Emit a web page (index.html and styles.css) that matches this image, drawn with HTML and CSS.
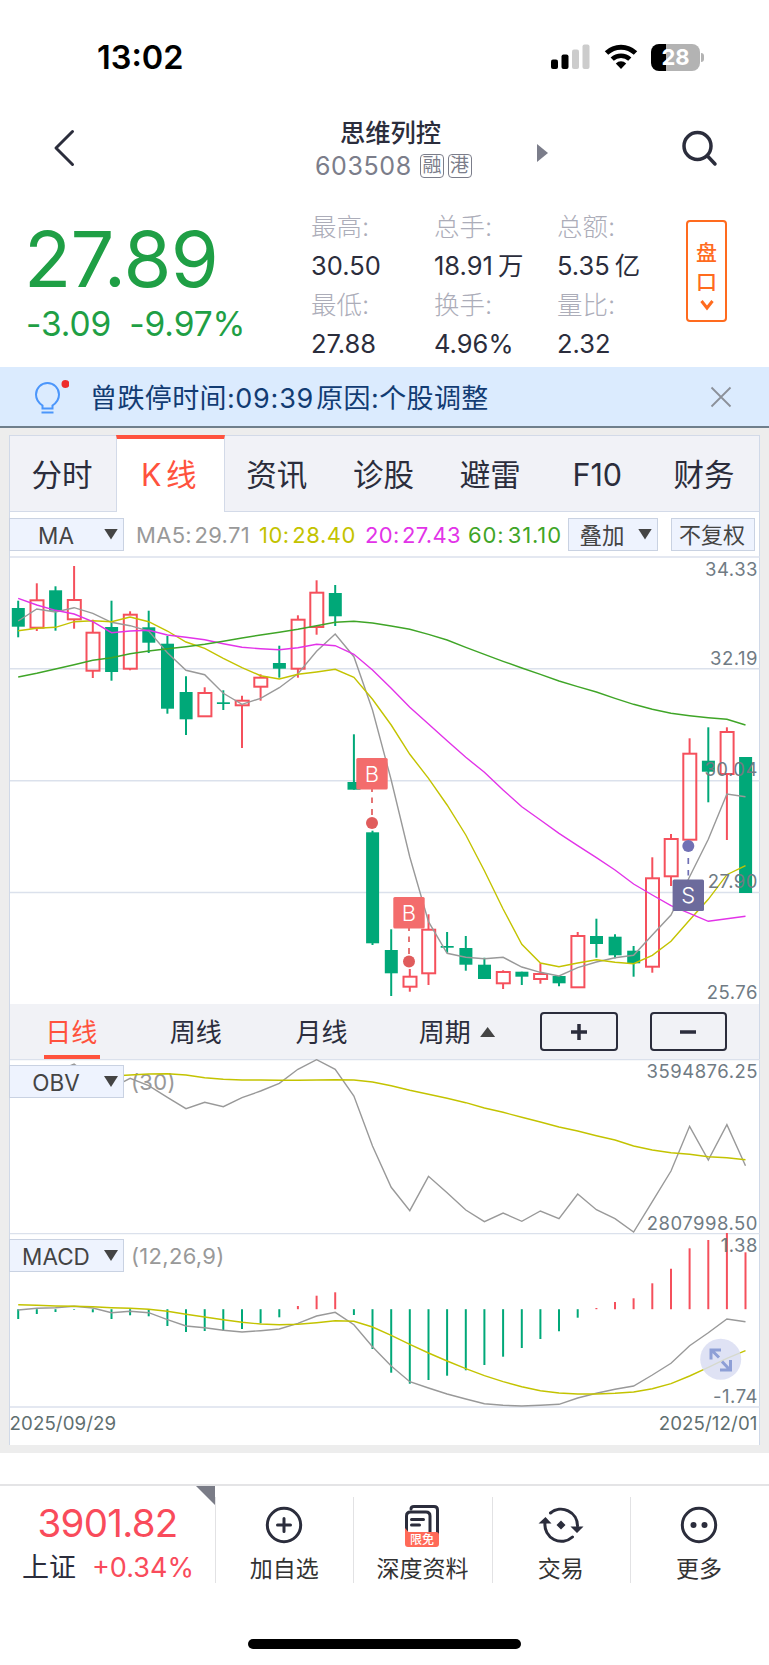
FILE: index.html
```html
<!DOCTYPE html>
<html lang="zh-CN">
<head>
    <meta charset="utf-8">
    <title>思维列控 603508</title>
    <link rel="stylesheet" href="styles.css">
</head>
<body>
    <div class="status-bar">
        <span class="time">13:02</span>
        <svg class="signal" width="39" height="26" viewBox="0 0 39 26">
            <rect x="0" y="15.500" width="7" height="9.500" rx="2" />
            <rect x="10.500" y="10.500" width="7" height="14.500" rx="2" />
            <rect x="21" y="5.500" width="7" height="19.500" rx="2" fill="#ccc" />
            <rect x="31.500" y="0.500" width="7" height="24.500" rx="2" fill="#ccc" />
        </svg>
        <svg class="wifi" width="34" height="26" viewBox="0 0 34 26">
            <path d="M2.500 9 A21 21 0 0 1 31.500 9" fill="none" stroke="#000" stroke-width="5" />
            <path d="M8.200 15.200 A12.800 12.800 0 0 1 25.800 15.200" fill="none" stroke="#000" stroke-width="4.600" />
            <path d="M17 25 L11.800 19.400 A7.500 7.500 0 0 1 22.200 19.400 Z" />
        </svg>
        <div class="battery"><span>28</span></div>
    </div>

    <header class="header">
        <svg class="back" width="24" height="40" viewBox="0 0 24 40">
            <path d="M20.500 3.500 L4 20 L20.500 36.500" />
        </svg>
        <div class="stock">
            <div class="stock-name">思维列控</div>
            <div class="stock-code"><span class="code">603508</span><span class="tag">融</span><span class="tag">港</span></div>
        </div>
        <div class="next"></div>
        <svg class="search" width="40" height="40" viewBox="0 0 40 40">
            <circle cx="17.500" cy="18" r="13.500" />
            <path d="M27.500 28 L35 36" />
        </svg>
    </header>

    <section class="quote">
        <div class="quote-price">
            <div class="price">27.89</div>
            <div class="change"><span>-3.09</span><span>-9.97%</span></div>
        </div>
        <div class="quote-grid">
            <div><label>最高:</label><b>30.50</b></div>
            <div><label>总手:</label><b>18.91<i>万</i></b></div>
            <div><label>总额:</label><b>5.35<i>亿</i></b></div>
            <div><label>最低:</label><b>27.88</b></div>
            <div><label>换手:</label><b>4.96%</b></div>
            <div><label>量比:</label><b>2.32</b></div>
        </div>
        <div class="pankou">
            <span>盘</span>
            <span>口</span>
            <svg width="14" height="12" viewBox="0 0 14 12"><path d="M1.500 2 L7 9 L12.500 2" /></svg>
        </div>
    </section>

    <div class="notice">
        <svg class="bulb" width="36" height="36" viewBox="0 0 36 36">
            <path d="M9.500 29.500 V26.500 C5 23.500 3 19.500 3 15.500 A11.500 11.500 0 0 1 26 15.500 C26 19.500 24 23.500 19.500 26.500 V29.500 Z" />
            <path d="M8.500 33.500 H20.500" />
            <circle cx="32.500" cy="5" r="4" />
        </svg>
        <span class="notice-text">曾跌停时间:<em>09:39</em>原因:个股调整</span>
        <svg class="close" width="22" height="22" viewBox="0 0 22 22"><path d="M1.500 1.500 L20.500 20.500 M20.500 1.500 L1.500 20.500" /></svg>
    </div>

    <main class="main">
        <div class="panel">
            <nav class="tabs">
                <a>分时</a>
                <a class="active">K 线</a>
                <a>资讯</a>
                <a>诊股</a>
                <a>避雷</a>
                <a>F10</a>
                <a>财务</a>
            </nav>

            <div class="ma-row">
                <div class="select">MA</div>
                <div class="ma ma5">MA5: 29.71</div>
                <div class="ma ma10">10: 28.40</div>
                <div class="ma ma20">20: 27.43</div>
                <div class="ma ma60">60: 31.10</div>
                <div class="btn btn-add">叠加</div>
                <div class="btn btn-fq">不复权</div>
            </div>

            <svg id="kline" class="kline" width="750" height="448" viewBox="10 556 750 448"></svg>

            <div class="period">
                <a class="active">日线</a>
                <a>周线</a>
                <a>月线</a>
                <a class="more">周期</a>
                <button><svg width="16" height="16" viewBox="0 0 16 16"><path d="M8 0 V16 M0 8 H16" /></svg></button>
                <button><svg width="16" height="16" viewBox="0 0 16 16"><path d="M0 8 H16" /></svg></button>
            </div>

            <div class="sub">
                <svg id="obv" width="750" height="174" viewBox="10 1059 750 174"></svg>
                <div class="select">OBV</div>
            </div>
            <div class="sub">
                <svg id="macd" width="750" height="212" viewBox="10 1233 750 212"></svg>
                <div class="select">MACD</div>
            </div>
        </div>
    </main>

    <footer class="footer">
        <div class="index">
            <div class="index-value">3901.82</div>
            <div class="index-row"><span>上证</span><span class="up">+0.34%</span></div>
        </div>
        <div class="action">
            <svg width="50" height="66" viewBox="0 0 50 66">
                <circle cx="25" cy="33" r="16.700" />
                <path d="M25 26.500 V39.500 M18.500 33 H31.500" />
            </svg>
            <span>加自选</span>
        </div>
        <div class="action">
            <svg width="50" height="66" viewBox="0 0 50 66">
                <path d="M14 17 C14 15 15 14.500 17 14.500 H37 C40 14.500 40.500 16 40.500 18 V43" />
                <path d="M9.500 43 V24 Q9.500 20 13.500 20 H29 Q33 20 33 24 V43" />
                <path d="M14.500 27.500 H26.500 M14.500 33 H22.500" />
                <path d="M8 36 L11.500 40 H39 Q42 40 42 43 V52 Q42 55 39 55 H11 Q8 55 8 52 Z" fill="#ff6a58" stroke="none" />
                <text x="25" y="52" text-anchor="middle">限免</text>
            </svg>
            <span>深度资料</span>
        </div>
        <div class="action">
            <svg width="50" height="66" viewBox="0 0 50 66">
                <path d="M14.500 21 A16.500 16.500 0 0 1 41.500 34" />
                <path d="M36.500 45 A16.500 16.500 0 0 1 9 31" />
                <path d="M2.500 31.500 L9.500 25 L15.500 31.500 Z M34.500 34.500 H47.500 L41 41 Z M25 28.500 L29.500 33 L25 37.500 L20.500 33 Z" fill="#2b2d3c" stroke="none" />
            </svg>
            <span>交易</span>
        </div>
        <div class="action">
            <svg width="50" height="66" viewBox="0 0 50 66">
                <circle cx="25" cy="33" r="16.700" />
                <circle cx="19.500" cy="33" r="3" fill="#2b2d3c" stroke="none" />
                <circle cx="30.500" cy="33" r="3" fill="#2b2d3c" stroke="none" />
            </svg>
            <span>更多</span>
        </div>
    </footer>
    <div class="home-bar"></div>

    <script src="chart.js"></script>
</body>
</html>
```

FILE: styles.css
```css
* {
    box-sizing: border-box;
}

body {
    margin: 0;
    width: 769px;
    height: 1665px;
    overflow: hidden;
    background: #fff;
    color: #2b2d3c;
    font-family: Inter, "Noto Sans CJK SC", sans-serif;
    -webkit-font-smoothing: antialiased;
}

/* status bar */
.status-bar {
    height: 114px;
    display: flex;
    align-items: center;
    padding: 0 69px 0 97px;
    color: #000;
}

.time {
    flex: 1;
    padding-top: 1px;
    font-size: 32.500px;
    font-weight: 600;
}

.wifi {
    margin: 0 13px 0 14px;
}

.battery {
    position: relative;
    width: 49px;
    height: 27px;
    border-radius: 8px;
    background: linear-gradient(90deg, #000 14.5px, #b3b3b3 14.5px);
    color: #fff;
    font-size: 22px;
    font-weight: 700;
    line-height: 27px;
    text-align: center;
}

.battery::after {
    content: "";
    position: absolute;
    right: -4px;
    top: 9px;
    width: 3px;
    height: 9px;
    border-radius: 0 4px 4px 0;
    background: #b3b3b3;
}

/* header */
.header {
    height: 92px;
    display: flex;
    padding-left: 52px;
}

.header svg {
    fill: none;
    stroke: #2b2d3c;
    stroke-width: 3;
    stroke-linecap: round;
    stroke-linejoin: round;
    margin-top: 14px;
}

.stock {
    width: 156px;
    margin-left: 240px;
}

.stock-name {
    margin-top: 1px;
    text-align: center;
    padding-right: 7px;
    font-size: 25.300px;
    font-weight: 500;
    line-height: 36px;
}

.stock-code {
    display: flex;
    align-items: center;
    height: 30px;
    margin-left: -1px;
    color: #7b7d8a;
    font-size: 25px;
    letter-spacing: 0.6px;
}

.code {
    width: 105px;
    flex: none;
}

.tag {
    width: 24px;
    height: 24px;
    margin-right: 3.500px;
    border: 1.500px solid #7b7d8a;
    border-radius: 4px;
    font-size: 19px;
    letter-spacing: 0;
    line-height: 21px;
    text-align: center;
    flex: none;
}

.next {
    margin: 30px 0 0 65px;
    width: 11px;
    height: 18px;
    background: #7b7d8a;
    clip-path: polygon(0 0, 100% 50%, 0 100%);
}

.header .search {
    stroke-width: 3.500;
    margin-left: 132px;
}

/* quote */
.quote {
    height: 161px;
    display: flex;
}

.quote-price {
    width: 311px;
    padding-left: 26px;
    color: #1f9f45;
}

.price {
    margin: 10px 0 0 -2px;
    font-size: 77.500px;
    line-height: 86px;
    letter-spacing: -0.800px;
}

.change {
    display: flex;
    gap: 18px;
    font-size: 33.500px;
    line-height: 44px;
    letter-spacing: -0.100px;
}

.quote-grid {
    width: 375px;
    display: grid;
    grid-template-columns: 123px 123px 129px;
    grid-template-rows: 78px 78px;
    padding-top: 1px;
}

.quote-grid label,
.quote-grid b {
    display: block;
    font-size: 25.500px;
    line-height: 39px;
    font-weight: 400;
    white-space: nowrap;
}

.quote-grid label {
    color: #acadb9;
    font-weight: 300;
}

.quote-grid i {
    font-style: normal;
    margin-left: 5px;
}

.pankou {
    width: 41px;
    height: 102px;
    margin-top: 14px;
    padding-top: 16px;
    border: 2px solid #ff6b1e;
    border-radius: 4px;
    display: flex;
    flex-direction: column;
    align-items: center;
    color: #ff6b1e;
    font-size: 21px;
    line-height: 30px;
    font-weight: 500;
}

.pankou span {
    height: 29px;
}

.pankou svg {
    fill: none;
    stroke: #ff6b1e;
    stroke-width: 3;
    margin-top: 3px;
}

/* notice */
.notice {
    height: 61px;
    display: flex;
    align-items: center;
    padding: 0 37px 0 33px;
    background: #dbebfe;
    border-bottom: 2px solid #6f7f8c;
}

.bulb {
    fill: none;
    stroke: #4b96fb;
    stroke-width: 2;
}

.bulb circle {
    fill: #ee2c2c;
    stroke: none;
}

.notice-text {
    flex: 1;
    margin-left: 21px;
    color: #123c73;
    font-size: 27px;
    letter-spacing: 0.4px;
    white-space: nowrap;
}

.notice-text em {
    font-style: normal;
    letter-spacing: 0.8px;
    margin-right: 2px;
}

.close {
    stroke: #8b9099;
    stroke-width: 1.800;
}

/* chart panel */
.main {
    height: 1025px;
    padding: 7px 9px 8px;
    background: #ededed;
}

.panel {
    width: 751px;
    height: 1010px;
    background: #fff;
    border-left: 1px solid #d0d9e8;
    border-right: 1px solid #d0d9e8;
}

.tabs {
    height: 77px;
    display: flex;
    background: #f1f2f7;
    border-top: 1px solid #d3dae8;
}

.tabs a {
    flex: 1;
    padding-right: 3px;
    border-bottom: 1px solid #d3dae8;
    font-size: 30.500px;
    line-height: 77px;
    text-align: center;
}

.tabs .active {
    margin: -1px 0 0 -1px;
    padding-right: 3px;
    background: #fff;
    color: #ff523d;
    border: 1px solid #d3dae8;
    border-top: 4px solid #ff523d;
    border-bottom: 0;
    line-height: 72px;
    word-spacing: -4px;
}

.ma-row {
    height: 44px;
    display: flex;
    align-items: center;
}

.select,
.btn {
    height: 33px;
    background: #eef3fe;
    border: 1px solid #c9d2e2;
    color: #444;
    font-size: 22.500px;
    line-height: 33px;
}

.select {
    width: 115px;
    margin-left: -1px;
    padding-right: 21px;
    text-align: center;
    position: relative;
    flex: none;
}

.select::after,
.btn-add::after {
    content: "";
    position: absolute;
    right: 5px;
    top: 10px;
    width: 14px;
    height: 11px;
    background: #444;
    clip-path: polygon(0 0, 100% 0, 50% 100%);
}

.ma {
    padding-top: 2px;
    font-size: 22px;
    letter-spacing: 0.5px;
    word-spacing: -4px;
    flex: none;
    white-space: nowrap;
}

.ma5 {
    width: 123px;
    margin-left: 12px;
    color: #999;
    letter-spacing: 0.3px;
}

.ma10 {
    width: 106px;
    color: #c3c300;
}

.ma20 {
    width: 103px;
    color: #e233e8;
    letter-spacing: 0.3px;
}

.ma60 {
    width: 100px;
    color: #3fa527;
    letter-spacing: 0.9px;
}

.btn {
    position: relative;
    text-align: center;
    flex: none;
}

.btn-add {
    width: 90px;
    padding-right: 22px;
}

.btn-fq {
    width: 84px;
    margin-left: 13px;
    padding-right: 2px;
    font-size: 22px;
}

.panel svg {
    display: block;
}

/* period switch */
.period {
    height: 55px;
    display: flex;
    align-items: center;
    padding-left: 34px;
    background: #f1f2f6;
}

.period a {
    height: 55px;
    width: 56px;
    margin-right: 69px;
    padding-right: 1px;
    font-size: 26px;
    line-height: 58px;
    text-align: center;
    white-space: nowrap;
}

.period .active {
    color: #ff523d;
    border-bottom: 4px solid #ff523d;
}

.period .active + a {
    margin-right: 70px;
}

.period .more {
    width: 78px;
    margin-right: 44px;
    margin-left: 0;
    text-align: left;
    position: relative;
}

.more::after {
    content: "";
    position: absolute;
    right: 1px;
    top: 23px;
    width: 15px;
    height: 10px;
    background: #444;
    clip-path: polygon(50% 0, 100% 100%, 0 100%);
}

.period button {
    width: 78px;
    height: 39px;
    margin-right: 32px;
    padding: 0;
    background: none;
    border: 2px solid #2b2d3c;
    border-radius: 4px;
    display: flex;
    align-items: center;
    justify-content: center;
}

.period button svg {
    stroke: #2b2d3c;
    stroke-width: 3.500;
}

.sub {
    position: relative;
}

.sub .select {
    position: absolute;
    left: 0;
    top: 6px;
}

/* chart drawing */
.grid {
    stroke: #dbe1ec;
    stroke-width: 1.500;
}

.line {
    fill: none;
    stroke-width: 1.400;
}

.axis {
    fill: #707b84;
    font-size: 18.500px;
    letter-spacing: 0.5px;
}

.date {
    fill: #5f6f70;
    font-size: 18.700px;
    letter-spacing: 0.1px;
}

.param {
    fill: #999;
    font-size: 22px;
    letter-spacing: 0.3px;
}

.mark {
    fill: #fff;
    font-size: 22px;
    font-weight: 300;
}

/* footer */
.footer {
    height: 106px;
    margin-top: 31px;
    border-top: 2px solid #e4e4e6;
    display: flex;
}

.index {
    position: relative;
    width: 215px;
    padding: 12px 0 0 0;
    color: #f94b5b;
    text-align: center;
    white-space: nowrap;
}

.index::after {
    content: "";
    position: absolute;
    right: 0;
    top: 0;
    width: 19px;
    height: 19px;
    background: #7a7c87;
    clip-path: polygon(0 0, 100% 0, 100% 100%);
}

.index-value {
    font-size: 38.500px;
    line-height: 50px;
    letter-spacing: -0.700px;
}

.index-row {
    display: flex;
    gap: 16px;
    padding-left: 22px;
    font-size: 27px;
    line-height: 40px;
}

.index-row span:first-child {
    color: #2b2d3c;
}

.action {
    width: 138.300px;
    height: 86px;
    margin-top: 11px;
    padding-right: 1px;
    border-left: 1px solid #e2e2e4;
    text-align: center;
    font-size: 23px;
    color: #333;
    line-height: 34px;
}

.action svg {
    display: block;
    margin: -5px auto -6px;
    fill: none;
    stroke: #2b2d3c;
    stroke-width: 3;
    stroke-linecap: round;
}

.action text {
    fill: #fff;
    stroke: none;
    font-size: 12px;
    font-weight: 500;
}

.home-bar {
    width: 273px;
    height: 10px;
    margin: 49px 0 0 248px;
    border-radius: 5px;
    background: #000;
}
```

FILE: chart.js
```javascript
var GREEN = '#00a878', RED = '#f5505c', GRAY = '#999', YELLOW = '#c3c300', PINK = '#e233e8';

// wick top, body top, body bottom, wick bottom, 1 = up
var candles = [
    [600.7, 608, 626.7, 637.3, 0], [583.3, 600.3, 627.7, 631, 1], [586.3, 590.3, 610.7, 630.7, 0],
    [566, 600, 619.3, 628.7, 1], [619.7, 632.7, 670.7, 678, 1], [600.7, 627, 672, 680.7, 0],
    [611.3, 614.7, 668.7, 670.3, 1], [610.7, 627.3, 642.7, 653, 0], [636, 643.7, 708.7, 713.7, 0],
    [676.3, 692, 719.3, 735, 0], [687.3, 693, 716.3, 716.3, 1], [690.3, 702.3, 704, 710, 0],
    [695.7, 700.7, 705.3, 748, 1], [674.3, 677.7, 686.7, 700.7, 1], [645.7, 663, 668.7, 677.7, 0],
    [615.3, 619.7, 668.7, 677.7, 1], [580.3, 592.7, 627, 634.7, 1], [585, 593, 616.3, 626, 0],
    [734.3, 782, 789.7, 789.7, 0], [830.7, 832.3, 943.3, 945, 0], [929.3, 950, 973.3, 996, 0],
    [969, 976.7, 986.7, 991.7, 1], [914.3, 929.7, 973.3, 985, 1], [932, 946, 947.7, 952.7, 0],
    [936, 948, 964.7, 970.7, 0], [957.7, 964.7, 979, 979, 0], [970.3, 972, 983.3, 989, 1],
    [971.7, 971.7, 976.7, 985, 0], [963.3, 974, 979, 983.7, 1], [976, 976, 983.3, 986.3, 0],
    [932, 936, 987.3, 987.3, 1], [918.7, 936, 944, 957.7, 0], [934.3, 936.7, 955.3, 958.3, 0],
    [946, 950.7, 963.3, 976.7, 0], [857.3, 878.3, 966.7, 972.7, 1], [834, 839, 876.3, 886, 1],
    [738.3, 753.7, 839.7, 839.7, 1], [727.3, 760.7, 771.7, 802.3, 0], [727.3, 732, 774, 840, 1],
    [757, 757, 893, 893, 0]
];

var ma5 = [621, 609, 612, 607.7, 613.3, 622.3, 625.7, 631, 652.7, 670.3, 674.7, 693.3, 704.3, 698.3, 687.7, 673.7, 651.3, 634, 656.7, 710,
    780, 857, 921.7, 953.3, 957.3, 958.7, 957.3, 967, 972.3, 976, 967.7, 962, 957.7, 955.3, 935, 915, 876.7, 839.3, 794, 796.7];
var ma10 = [630.7, 628.3, 627.3, 621.7, 620.7, 621.7, 617, 621.7, 631, 642, 648.3, 658.3, 667.7, 675.7, 679, 674.3, 672, 669.3, 677.3, 699.3,
    725, 754.3, 778.3, 805, 835, 870.7, 909, 944.3, 963, 966.7, 963, 959.7, 962.3, 963.7, 955.3, 941.3, 920, 899.3, 874.7, 865.7];
var ma20 = [598.3, 605, 610.3, 614, 621.7, 632.7, 631, 630.3, 635, 637.3, 639.7, 643.7, 647.3, 648.7, 649.7, 647.7, 644.3, 645.7, 654.3, 670,
    688.3, 707.3, 724, 740.7, 757.3, 772.3, 790, 806.7, 820, 833.3, 845.7, 857.7, 870, 884, 895, 905.7, 913.3, 921.3, 918.7, 916.3];
var ma60 = [677, 673.3, 669, 664.7, 660.3, 657.7, 653.7, 651, 648.7, 646.7, 644.3, 641.3, 638, 635, 632.3, 629.3, 625.7, 622.3, 621.3, 623,
    626, 629.3, 634.3, 640, 647.3, 654.3, 661.3, 668, 674.3, 681, 686.7, 692, 698.3, 704.3, 709.3, 713.3, 715.7, 717.7, 719.3, 725];

var obv = [1085, 1078, 1072, 1064, 1078, 1088, 1078.3, 1085.7, 1097.3, 1108.7, 1102.3, 1106.7, 1097.7, 1091, 1083.3, 1069.3, 1059.7, 1069.3, 1096, 1146,
    1187.3, 1210.7, 1176.3, 1192.7, 1210, 1221.7, 1213, 1221.3, 1211, 1218.7, 1194, 1209.7, 1218.7, 1232, 1201.7, 1171, 1126.3, 1160, 1124.7, 1165.7];
var obvMa = [1080, 1079, 1078, 1077, 1076.5, 1076, 1075, 1074, 1073.7, 1075, 1077.7, 1079.3, 1080, 1080, 1080.2, 1080.3, 1080, 1079.7, 1080, 1082,
    1085.7, 1090.3, 1094.3, 1098.3, 1102.7, 1108, 1112.3, 1117.3, 1122, 1127, 1131, 1135.7, 1140, 1146, 1150, 1152.7, 1154.3, 1156.7, 1157.7, 1159.7];

var bars = [1319, 1314, 1312, 1309.8, 1312.3, 1319, 1315.3, 1316.3, 1326, 1332, 1331, 1330.7, 1329, 1323.3, 1317.3, 1306, 1295.7, 1292.3, 1315, 1349,
    1372.7, 1383.7, 1380, 1375.7, 1370.3, 1365, 1356.7, 1348, 1339, 1331.3, 1317.7, 1308, 1302, 1298.3, 1283.3, 1268.7, 1248.3, 1240, 1233, 1252.3];
var dif = [1310, 1308.3, 1307.7, 1306.3, 1308, 1312.7, 1311.3, 1312.7, 1319.7, 1326, 1327.7, 1330.3, 1332, 1330.7, 1329, 1323.3, 1316, 1312.3, 1324.7, 1346.7,
    1366, 1381.7, 1388, 1394, 1399, 1403.7, 1405.3, 1406, 1405.3, 1404.3, 1398, 1393.3, 1389.3, 1386, 1375, 1363.3, 1345.7, 1332.7, 1319, 1321.7];
var dea = [1304.7, 1305.3, 1306, 1306.3, 1306.7, 1307.7, 1308.3, 1309.3, 1311.3, 1314.3, 1317, 1319.7, 1322.3, 1324, 1324.7, 1324.3, 1322.7, 1320.7, 1321.3, 1327,
    1335.3, 1344.3, 1353, 1361, 1368.7, 1375.7, 1381.7, 1386.7, 1390.7, 1393, 1394, 1394, 1393.3, 1392, 1388.7, 1383.7, 1376, 1367.3, 1358.3, 1350.7];

function cx(i) {
    return +(18.2 + i * 18.65).toFixed(1);
}

function line(data, color) {
    var pts = data.map(function (y, i) { return cx(i) + ',' + y; }).join(' ');
    return '<polyline class="line" points="' + pts + '" stroke="' + color + '" />';
}

function vline(x, y1, y2, color, w) {
    return '<path d="M' + x + ' ' + y1 + ' V' + y2 + '" stroke="' + color + '" stroke-width="' + w + '" />';
}

function grid(y) {
    return '<path class="grid" d="M10 ' + y + ' H760" />';
}

function text(x, y, str, cls, anchor) {
    return '<text class="' + cls + '" x="' + x + '" y="' + y + '" text-anchor="' + (anchor || 'end') + '">' + str + '</text>';
}

// dashes: list of [y1, y2] between the box and its dot
function mark(x, y, dotY, str, box, dot, dashes) {
    var s = dashes.map(function (d) { return vline(x, d[0], d[1], dot, 1.7); }).join('');
    s += '<circle cx="' + x + '" cy="' + dotY + '" r="6" fill="' + dot + '" />';
    s += '<rect x="' + (x - 15.7) + '" y="' + (y - 15.7) + '" width="31.400" height="31.400" rx="1.500" fill="' + box + '" />';
    return s + text(x, y + 8, str, 'mark', 'middle');
}

function drawKline() {
    var s = [557, 668.8, 780.8, 892.6].map(grid).join('');
    candles.forEach(function (c, i) {
        var x = cx(i);
        if (c[4]) {
            s += vline(x, c[0], c[1], RED, 2) + vline(x, c[2], c[3], RED, 2);
            s += '<rect x="' + (x - 6.3) + '" y="' + c[1] + '" width="13" height="' + (c[2] - c[1]) + '" fill="none" stroke="' + RED + '" stroke-width="2" />';
        } else {
            s += vline(x, c[0], c[3], GREEN, 2);
            s += '<rect x="' + (x - 6.4) + '" y="' + c[1] + '" width="13" height="' + (c[2] - c[1]) + '" fill="' + GREEN + '" />';
        }
    });
    s += line(ma5, GRAY) + line(ma10, YELLOW) + line(ma20, PINK) + line(ma60, '#3fa527');
    s += text(758, 575.5, '34.33', 'axis') + text(758, 665, '32.19', 'axis') + text(758, 776, '30.04', 'axis');
    s += text(758, 887.5, '27.90', 'axis') + text(758, 999, '25.76', 'axis');
    s += mark(372, 773.8, 823, 'B', '#f36c6c', '#e05c5c', [[789, 792], [797.5, 803], [809, 815]]);
    s += mark(409, 912.8, 961.5, 'B', '#f36c6c', '#e05c5c', [[928, 931], [936.5, 942], [948, 954]]);
    s += mark(688.3, 895.3, 846, 'S', '#6c6b9c', '#7070b4', [[858, 864], [870, 875.5]]);
    document.getElementById('kline').innerHTML = s;
}

function drawObv() {
    var s = grid(1059.5) + text(131, 1090, '(30)', 'param', 'start');
    s += line(obv, GRAY) + line(obvMa, YELLOW);
    s += text(758, 1077.5, '3594876.25', 'axis') + text(758, 1229.5, '2807998.50', 'axis');
    document.getElementById('obv').innerHTML = s;
}

function drawMacd() {
    var s = grid(1233.5) + grid(1407) + text(131, 1264, '(12,26,9)', 'param', 'start');
    bars.forEach(function (y, i) {
        s += vline(cx(i), 1309.2, y, y < 1309.2 ? RED : GREEN, 2);
    });
    s += line(dif, GRAY) + line(dea, YELLOW);
    s += text(758, 1251.5, '1.38', 'axis') + text(758, 1403, '-1.74', 'axis');
    s += text(9.5, 1429.5, '2025/09/29', 'date', 'start') + text(757.5, 1429.5, '2025/12/01', 'date');
    // fullscreen button
    s += '<circle cx="720.700" cy="1359.200" r="20.500" fill="#d9ddf2" fill-opacity=".85" />';
    s += '<path d="M719 1357.500 L711.500 1350 M721 1350 H711 V1359.500 M722 1361.500 L729.500 1369.500 M720 1370 H730.500 V1360" fill="none" stroke="#8e9fd6" stroke-width="3" />';
    document.getElementById('macd').innerHTML = s;
}

drawKline();
drawObv();
drawMacd();
```
